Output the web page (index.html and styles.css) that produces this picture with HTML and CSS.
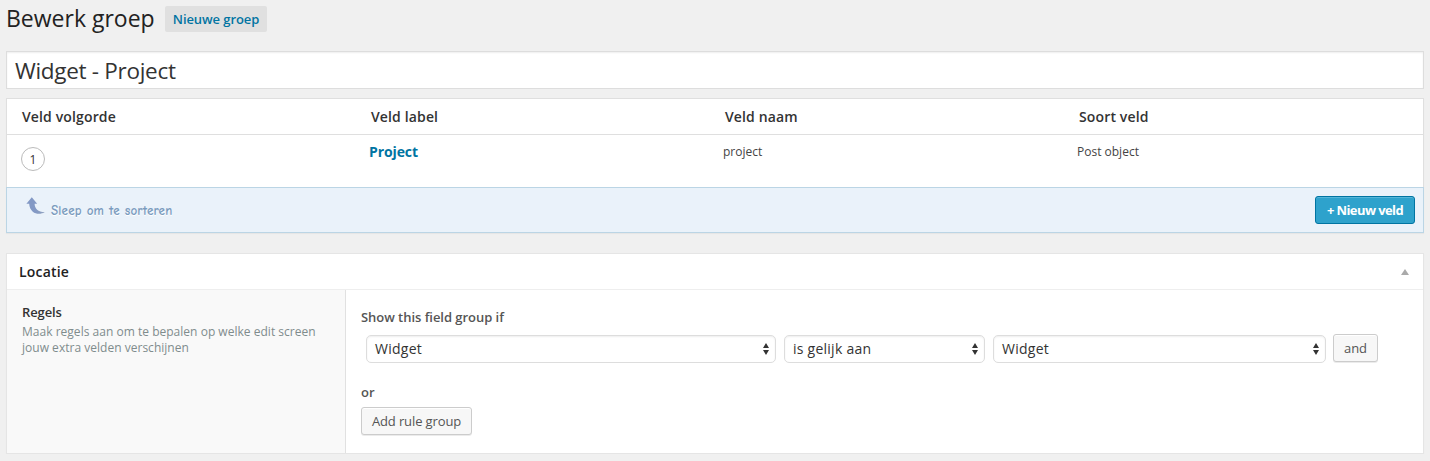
FILE: index.html
```html
<!DOCTYPE html>
<html lang="nl">
<head>
<meta charset="utf-8">
<title>Bewerk groep</title>
<link rel="stylesheet" href="styles.css">
</head>
<body>
<main class="wrap">
  <header class="page-head">
    <h1 class="page-title">Bewerk groep</h1>
    <a class="add-new">Nieuwe groep</a>
  </header>

  <div class="title-field">Widget - Project</div>

  <section class="fields">
    <div class="fields-head">
      <div>Veld volgorde</div>
      <div>Veld label</div>
      <div>Veld naam</div>
      <div>Soort veld</div>
    </div>
    <div class="field-row">
      <div><span class="order">1</span></div>
      <div><a class="field-label">Project</a></div>
      <div>project</div>
      <div>Post object</div>
    </div>
    <div class="fields-foot">
      <svg class="arrow" width="20" height="18" viewBox="0 0 20 18">
        <defs><linearGradient id="tail" x1="0" x2="1" y1="0" y2="0"><stop offset="0.45" stop-color="#8399c5"/><stop offset="1" stop-color="#7489ad" stop-opacity=".75"/></linearGradient></defs>
        <path d="M5.800 .2 11.200 6.800H8.600C8.700 11.600 12 15 18.800 15.300 15 17.400 10 17.400 6.800 14.700 4.600 12.800 3.300 10 3.200 6.800H.4Z" fill="url(#tail)"/>
      </svg>
      <span class="hint">Sleep om te sorteren</span>
      <button class="btn primary">+ Nieuw veld</button>
    </div>
  </section>

  <section class="postbox">
    <div class="postbox-head">
      <h2 class="postbox-title">Locatie</h2>
      <svg class="toggle" width="8" height="6" viewBox="0 0 8 6"><path d="M4 0 8 6H0Z" fill="#aaa"/></svg>
    </div>
    <div class="postbox-body">
      <div class="info">
        <h3 class="info-title">Regels</h3>
        <p class="info-text">Maak regels aan om te bepalen op welke edit screen<br>jouw extra velden verschijnen</p>
      </div>
      <div class="rules">
        <h4 class="rules-title">Show this field group if</h4>
        <div class="rule">
          <div class="select param">Widget<svg width="6" height="12" viewBox="0 0 6 12"><path d="M3 0 6 5H0ZM0 7H6L3 12Z" fill="#333"/></svg></div>
          <div class="select operator">is gelijk aan<svg width="6" height="12" viewBox="0 0 6 12"><path d="M3 0 6 5H0ZM0 7H6L3 12Z" fill="#333"/></svg></div>
          <div class="select value">Widget<svg width="6" height="12" viewBox="0 0 6 12"><path d="M3 0 6 5H0ZM0 7H6L3 12Z" fill="#333"/></svg></div>
          <button class="btn and">and</button>
        </div>
        <h4 class="rules-title or">or</h4>
        <button class="btn group">Add rule group</button>
      </div>
    </div>
  </section>
</main>
</body>
</html>
```
FILE: styles.css
```css
* { box-sizing: border-box; }
body {
  margin: 0;
  background: #f0f0f0;
  color: #444;
  font-family: "Open Sans", sans-serif;
  font-size: 13px;
}
h1, h2, h3, h4, p { margin: 0; }
.wrap { padding: 0 6px; }

.page-head { display: flex; align-items: flex-start; gap: 11px; height: 51px; padding-top: 6px; }
.page-title { font-size: 23px; font-weight: 400; line-height: 25px; color: #222; width: 148px; white-space: nowrap; }
.add-new {
  height: 26px; width: 102px; text-align: center; line-height: 27px;
  background: #e0e0e0; color: #0074a2; border-radius: 2px;
  font-weight: 600; white-space: nowrap; letter-spacing: -.08px;
}

.title-field {
  height: 38px; margin-bottom: 9px; padding: 0 8px;
  border: 1px solid #ddd; background: #fff;
  box-shadow: inset 0 1px 2px rgba(0,0,0,.07);
  font-size: 22.5px; letter-spacing: -.3px; line-height: 38px; color: #333;
}

.fields { border: 1px solid #dfdfdf; border-bottom: 0; background: #fff; box-shadow: 0 1px 1px rgba(0,0,0,.04); }
.fields-head, .field-row { display: grid; grid-template-columns: 349px 354px 354px 1fr; }
.fields-head { height: 36px; padding-left: 15px; border-bottom: 1px solid #dfdfdf; font-size: 14px; font-weight: 600; letter-spacing: .14px; line-height: 36px; color: #333; }
.field-row { height: 52px; padding: 8px 0 0 14px; font-size: 12px; line-height: 18px; grid-template-columns: 348px 354px 354px 1fr; }
.order {
  display: block; width: 24px; height: 24px; margin-top: 4px;
  border: 1px solid #bbb; border-radius: 50%;
  text-align: center; font-size: 12px; line-height: 23px; color: #333;
}
.field-label { font-size: 14px; font-weight: 700; letter-spacing: -.1px; color: #0074a2; }
.fields-foot {
  display: flex; align-items: flex-start; height: 46px; margin: 0 -1px;
  padding: 8px 8px 0 19px; border: 1px solid #bbd5e5; background: #eaf2fa;
}
.arrow { margin-top: 1px; }
.hint { margin: 6px auto 0 5px; font-family: "Comic Sans MS", "Comic Neue", "Open Sans", sans-serif; font-size: 13px; font-weight: 700; letter-spacing: .22px; line-height: 18px; color: #7a9bbe; text-shadow: 0 1px 0 #fff; }

.btn {
  height: 28px; padding: 0; border: 1px solid #ccc; border-radius: 3px;
  background: #f7f7f7; color: #555; box-shadow: inset 0 1px 0 #fff, 0 1px 0 rgba(0,0,0,.08);
  font-family: inherit; font-size: 13px; line-height: 26px; text-align: center;
}
.primary { width: 100px; border-color: #0074a2; background: #2ea2cc; color: #fff; box-shadow: inset 0 1px 0 rgba(120,200,230,.5); font-weight: 700; letter-spacing: -.6px; }

.postbox { margin-top: 20px; height: 201px; border: 1px solid #e5e5e5; background: #fff; box-shadow: 0 1px 1px rgba(0,0,0,.04); }
.postbox-head { display: flex; justify-content: space-between; align-items: center; height: 36px; padding: 0 14px 0 12px; border-bottom: 1px solid #eee; }
.postbox-title { font-size: 14px; font-weight: 600; letter-spacing: .2px; line-height: 20px; color: #222; }
.toggle { margin-top: 1px; }
.postbox-body { display: flex; height: 163px; }
.info { width: 339px; padding: 13px 0 0 15px; border-right: 1px solid #e1e1e1; background: #f9f9f9; }
.info-title { font-size: 13px; font-weight: 600; letter-spacing: -.1px; line-height: 18px; color: #333; }
.info-text { margin-top: 3px; font-size: 12px; letter-spacing: .02px; line-height: 16px; color: #7f8c8d; white-space: nowrap; }
.rules { flex: 1; padding: 18px 0 0 15px; }
.rules-title { font-size: 13px; font-weight: 600; letter-spacing: -.04px; line-height: 18px; color: #555; }
.rule { display: flex; align-items: flex-start; padding: 8px 0 0 5px; }
.select {
  display: flex; justify-content: space-between; align-items: center;
  height: 28px; margin: 1px 8px 0 0; padding: 0 6px 0 8px;
  border: 1px solid #ddd; border-radius: 5px; background: #fff;
  box-shadow: inset 0 1px 2px rgba(0,0,0,.07);
  font-size: 14px; letter-spacing: .25px; line-height: 26px; color: #333;
}
.param { width: 410px; }
.operator { width: 201px; }
.value { width: 333px; margin-right: 7px; }
.and { width: 45px; }
.or { margin-top: 20px; }
.group { display: block; width: 111px; margin-top: 6px; letter-spacing: -.12px; }
```
